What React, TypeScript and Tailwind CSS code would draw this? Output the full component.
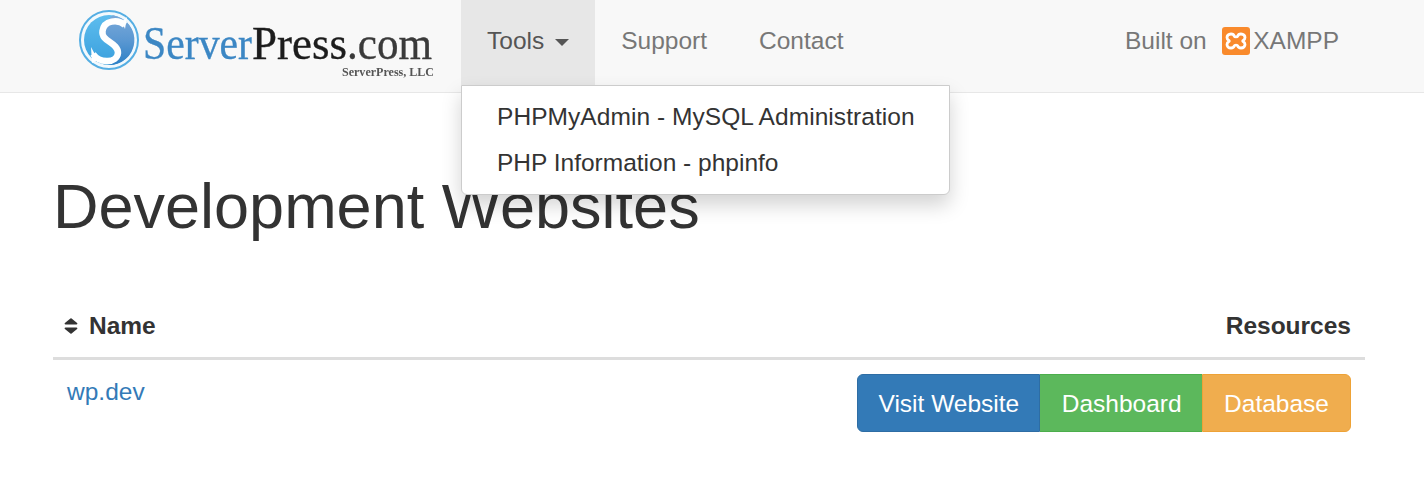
export default function App() {
  const sans = "font-['Liberation_Sans',Arial,sans-serif]";
  return (
    <div className={`${sans} relative h-[484px] w-[1424px] overflow-hidden bg-white text-[24.5px] leading-[35px] text-[#333]`}>
      <nav className="flex h-[93px] items-start border-b border-[#e7e7e7] bg-[#f8f8f8] text-[#777]">
        <div className="h-[92px] w-[461px] shrink-0 pl-[78px] pt-[10px]">
          <svg className="blur-[0.4px]" width="358" height="70" viewBox="0 0 358 70" aria-label="ServerPress.com logo">
            <defs>
              <linearGradient id="g" x1="0" y1="0" x2="0" y2="1">
                <stop offset="0" stopColor="#5dbdee" />
                <stop offset="1" stopColor="#3a9fdd" />
              </linearGradient>
              <linearGradient id="h" x1="0" y1="0" x2="0" y2="1">
                <stop offset="0" stopColor="#7aa9d9" />
                <stop offset="0.5" stopColor="#5b98d2" />
                <stop offset="1" stopColor="#2c80c6" />
              </linearGradient>
            </defs>
            <circle cx="31" cy="30" r="29" fill="#f2f9fd" stroke="#55aee3" strokeWidth="2" />
            <circle cx="31" cy="30" r="25" fill="url(#g)" />
            <path d="M35 5.300A25 25 0 0 1 30 55C40 52 43 44 38 37 32 30 24 26 28 15 29 11 32 7 35 5.300z" fill="url(#h)" />
            <path d="M47 15C40 9 26 10 24.500 21 23 32 40 32 40 43 39 53 22 54 15 44" fill="none" stroke="#fff" strokeWidth="6.500" />
            <path d="M49 7 47 19 44 12zM13 37 14 53 20 50z" fill="#fff" />
            <g fontFamily="'Liberation Serif',serif" fontSize="47" strokeWidth="0.35">
              <text x="65" y="49" fill="#3c87c4" stroke="#3c87c4" textLength="109" lengthAdjust="spacingAndGlyphs">Server</text>
              <text x="174" y="49" fill="#1c1c1c" stroke="#1c1c1c" textLength="95" lengthAdjust="spacingAndGlyphs">Press</text>
              <text x="269" y="49" fill="#3a3a3a" stroke="#3a3a3a" textLength="85" lengthAdjust="spacingAndGlyphs">.com</text>
            </g>
            <text x="264" y="66" fontFamily="'Liberation Serif',serif" fontSize="12" fontWeight="700" fill="#555" textLength="92" lengthAdjust="spacingAndGlyphs">ServerPress, LLC</text>
          </svg>
        </div>
        <div className="flex h-[85px] items-center bg-[#e7e7e7] px-[26px] pb-[4px] text-[#555]">
          Tools
          <span className="ml-[11px] mt-[3px] h-0 w-0 border-x-[7px] border-t-[7px] border-x-transparent border-t-[#555]" />
        </div>
        <div className="flex h-[85px] items-center px-[26px] pb-[4px]">Support</div>
        <div className="flex h-[85px] items-center px-[26px] pb-[4px]">Contact</div>
        <div className="ml-auto flex h-[85px] items-center pb-[4px] pr-[85px]">
          <span>Built on</span>
          <svg className="ml-[15.500px] mr-[3px]" width="28" height="28" viewBox="0 0 28 28" aria-label="XAMPP logo">
            <rect width="28" height="28" rx="3" fill="#f98a2c" />
            <path d="M9 7c2.200 0 3.100 1.400 3.400 2.400.2.700 3 .700 3.200 0C15.900 8.400 16.800 7 19 7c2.700 0 4 1.800 4 3.500 0 1.500-.9 2.500-1.900 3-.5.300-.5.700 0 1 1 .500 1.900 1.500 1.900 3 0 1.700-1.300 3.500-4 3.500-2.200 0-3.100-1.400-3.400-2.400-.2-.7-3-.7-3.200 0C12.100 19.600 11.200 21 9 21c-2.700 0-4-1.800-4-3.500 0-1.500.9-2.500 1.900-3 .5-.3.5-.7 0-1C5.900 13 5 12 5 10.500 5 8.800 6.300 7 9 7z" fill="none" stroke="#fff" strokeWidth="2.800" />
          </svg>
          <span>XAMPP</span>
        </div>
      </nav>

      <div className="absolute left-[461px] top-[85px] z-10 h-[110px] w-[489px] rounded-b-[6px] border border-[#ccc] bg-white py-[9px] pl-[35px] shadow-[0_10px_20px_rgba(0,0,0,0.175)]">
        <div className="h-[46px] leading-[44px] tracking-[0.06px]">PHPMyAdmin - MySQL Administration</div>
        <div className="h-[46px] leading-[44px]">PHP Information - phpinfo</div>
      </div>

      <main className="pl-[53px] pr-[59px]">
        <h1 className="mt-[75px] text-[63px] font-normal leading-[76px]">Development Websites</h1>
        <table className="mt-[52px] w-full border-collapse">
          <thead>
            <tr className="border-b-[3.5px] border-[#ddd]">
              <th className="h-[62px] pb-[1px] pl-[11px] text-left font-bold">
                <span className="flex items-center">
                  <svg width="14" height="16" viewBox="0 0 14 16" className="mr-[11px]" aria-hidden="true">
                    <path d="M1.500 6.500h11c.8 0 1.200-.9.600-1.500L7.600.600a.9.9 0 0 0-1.200 0L.900 5c-.6.600-.2 1.500.6 1.500zM1.500 9.500h11c.8 0 1.200.9.600 1.500l-5.500 4.400a.9.9 0 0 1-1.200 0L.900 11c-.6-.6-.2-1.500.6-1.500z" fill="#333" />
                  </svg>
                  Name
                </span>
              </th>
              <th className="h-[62px] pb-[1px] pr-[14px] text-right font-bold">Resources</th>
            </tr>
          </thead>
          <tbody>
            <tr>
              <td className="pb-[14px] pl-[14px] pt-[14px] align-top text-[#337ab7]">wp.dev</td>
              <td className="pr-[14px] pt-[14px] align-top">
                <div className="flex justify-end text-white">
                  <span className="flex h-[58px] items-center rounded-l-[6px] border-[1.75px] border-[#2e6da4] bg-[#337ab7] pl-[20.250px] pr-[19.500px] pt-[1px]">Visit Website</span>
                  <span className="flex h-[58px] items-center border-y-[1.75px] border-[#4cae4c] bg-[#5cb85c] pl-[22px] pr-[20.500px] pt-[1px]">Dashboard</span>
                  <span className="flex h-[58px] items-center rounded-r-[6px] border-[1.75px] border-[#eea236] bg-[#f0ad4e] px-[21px] pt-[1px]">Database</span>
                </div>
              </td>
            </tr>
          </tbody>
        </table>
      </main>
    </div>
  );
}
